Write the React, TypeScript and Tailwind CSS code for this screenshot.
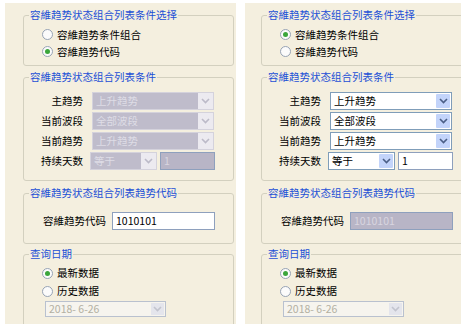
import React from 'react';

type Mode = 'code' | 'combo';

function Chevron({ color }: { color: string }) {
  return (
    <svg width="9" height="6" viewBox="0 0 9 6">
      <path d="M1 1l3.5 3.5L8 1" fill="none" stroke={color} strokeWidth="1.6" />
    </svg>
  );
}

function GroupBox({
  title,
  className,
  inner,
  children,
}: {
  title: string;
  className: string;
  inner: string;
  children: React.ReactNode;
}) {
  return (
    <fieldset className={`w-[211px] rounded-[3px] border border-[#d3d0bf] ${className}`}>
      <legend className="ml-[5px] px-[1px] leading-[14px] text-[#1c4fd6]">{title}</legend>
      <div className={inner}>{children}</div>
    </fieldset>
  );
}

function Radio({ label, checked }: { label: string; checked: boolean }) {
  return (
    <div className="flex items-center gap-[4px]">
      <span className="flex h-[11px] w-[11px] items-center justify-center rounded-full border border-[#97a3b4] bg-[#fbfbfb]">
        {checked && <span className="h-[5px] w-[5px] rounded-full bg-[#3ba63b]" />}
      </span>
      <span>{label}</span>
    </div>
  );
}

function Select({ value, disabled, width }: { value: string; disabled: boolean; width: string }) {
  if (disabled) {
    return (
      <div className={`flex h-[18px] items-stretch border border-[#d4d2dc] bg-[#bfbccb] ${width}`}>
        <span className="flex-1 truncate pl-[3px] leading-[16px] text-[#dedce6]">{value}</span>
        <span className="flex w-[15px] items-center justify-center bg-[#eceaf0]">
          <Chevron color="#bcbac8" />
        </span>
      </div>
    );
  }
  return (
    <div className={`flex h-[18px] items-stretch border border-[#7f9db9] bg-white ${width}`}>
      <span className="flex-1 truncate pl-[3px] leading-[16px] text-black">{value}</span>
      <span className="m-[1px] flex w-[14px] items-center justify-center rounded-[1px] bg-[#c3d4fa]">
        <Chevron color="#4b5f86" />
      </span>
    </div>
  );
}

function TextBox({ value, disabled, width }: { value: string; disabled: boolean; width: string }) {
  return (
    <div
      className={`h-[18px] border border-[#8ea0bd] pl-[3px] leading-[16px] ${width} ${
        disabled ? 'bg-[#b8b5c6] text-[#d8d6e0]' : 'bg-white text-black'
      }`}
    >
      {value}
    </div>
  );
}

function Row({ label, children }: { label: string; children: React.ReactNode }) {
  return (
    <div className="flex h-[20px] items-center">
      <span className="w-[59px] text-right">{label}</span>
      <div className="ml-[9px] flex items-center">{children}</div>
    </div>
  );
}

function Panel({ mode, className }: { mode: Mode; className: string }) {
  const byCode = mode === 'code';
  return (
    <div className={`h-[321px] overflow-hidden bg-[#f4efdf] ${className}`}>
      <GroupBox title="容維趋势状态组合列表条件选择" className="mt-[5px] h-[58px]" inner="pl-[18px] pt-[4px]">
        <div className="flex h-[17px] items-center">
          <Radio label="容維趋势条件组合" checked={!byCode} />
        </div>
        <div className="flex h-[17px] items-center">
          <Radio label="容維趋势代码" checked={byCode} />
        </div>
      </GroupBox>

      <GroupBox title="容維趋势状态组合列表条件" className="mt-[4px] h-[111px]" inner="pt-[7px]">
        <Row label="主趋势">
          <Select value="上升趋势" disabled={byCode} width="w-[122px]" />
        </Row>
        <Row label="当前波段">
          <Select value="全部波段" disabled={byCode} width="w-[122px]" />
        </Row>
        <Row label="当前趋势">
          <Select value="上升趋势" disabled={byCode} width="w-[122px]" />
        </Row>
        <Row label="持续天数">
          <div className="-ml-[2px] flex items-center gap-[3px]">
            <Select value="等于" disabled={byCode} width="w-[67px]" />
            <TextBox value="1" disabled={byCode} width="w-[55px]" />
          </div>
        </Row>
      </GroupBox>

      <GroupBox title="容維趋势状态组合列表趋势代码" className="mt-[5px] h-[58px]" inner="pl-[19px] pt-[11px]">
        <div className="flex h-[20px] items-center">
          <span className="w-[69px]">容維趋势代码</span>
          <TextBox value="1010101" disabled={!byCode} width="w-[103px]" />
        </div>
      </GroupBox>

      <GroupBox title="查询日期" className="mt-[3px] h-[90px]" inner="pl-[18px] pt-[3px]">
        <div className="flex h-[18px] items-center">
          <Radio label="最新数据" checked />
        </div>
        <div className="flex h-[18px] items-center">
          <Radio label="历史数据" checked={false} />
        </div>
        <div className="ml-[3px] mt-[1px] flex h-[16px] w-[121px] items-stretch border border-[#b9c1cf] bg-[#f6f4ee]">
          <span className="flex-1 pl-[3px] leading-[14px] text-[#b3b0a2]">2018- 6-26</span>
          <span className="m-[1px] flex w-[13px] items-center justify-center bg-[#e4e5ec]">
            <Chevron color="#c2c4ce" />
          </span>
        </div>
      </GroupBox>
    </div>
  );
}

export default function App() {
  return (
    <div className="flex h-[324px] w-[467px] overflow-hidden bg-white font-['Noto_Sans_CJK_SC','Liberation_Sans',sans-serif] text-[10.5px] leading-[14px] text-black">
      <Panel mode="code" className="ml-[5px] mt-[3px] w-[231px] pl-[18px]" />
      <Panel mode="combo" className="ml-[9px] mt-[3px] w-[216px] pl-[16px]" />
    </div>
  );
}
